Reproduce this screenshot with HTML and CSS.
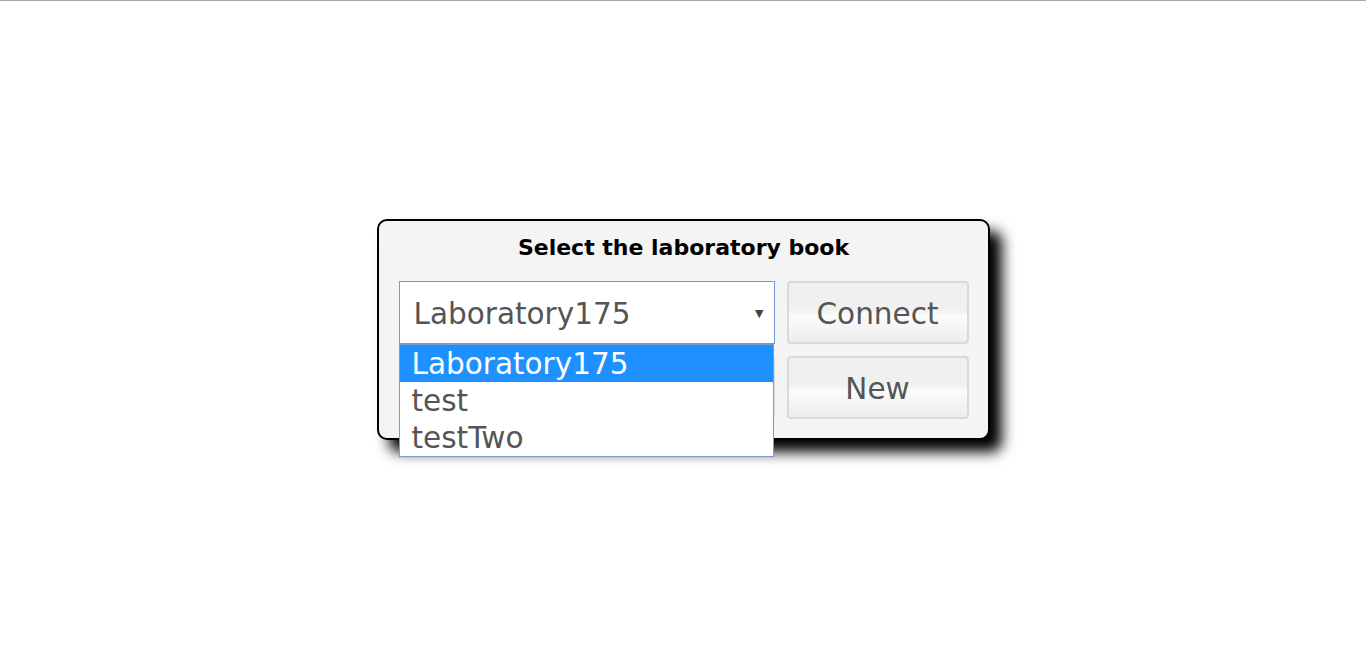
FILE: index.html
```html
<!DOCTYPE html>
<html>
<head>
<meta charset="utf-8">
<link rel="stylesheet" href="styles.css">
</head>
<body>
<div class="page">
  <div class="dialog">
    <div class="title">Select the laboratory book</div>
    <div class="grid">
      <div class="select-wrap">
        <div class="select">
          <span class="select-value">Laboratory175</span>
          <span class="arrow">▼</span>
        </div>
        <div class="dropdown">
          <div class="option selected">Laboratory175</div>
          <div class="option">test</div>
          <div class="option">testTwo</div>
        </div>
      </div>
      <button class="btn">Connect</button>
      <button class="btn" aria-label="Delete"></button>
      <button class="btn">New</button>
    </div>
  </div>
</div>
</body>
</html>
```
FILE: styles.css
```css
html, body {
  margin: 0;
  padding: 0;
  background: #fff;
}
body {
  border-top: 1px solid #a9a9a9;
  font-family: "DejaVu Sans", Verdana, sans-serif;
}
.page {
  height: 657px;
  display: flex;
  align-items: center;
  justify-content: center;
}
.dialog {
  width: 570px;
  box-sizing: content-box;
  background: #f4f4f4;
  border: 2px solid #000;
  border-radius: 10px;
  box-shadow: 12px 12px 14px #000;
  padding: 12px 19px 19px 20px;
}
.title {
  text-align: center;
  font-weight: bold;
  font-size: 22px;
  line-height: 30px;
  color: #000;
  margin-bottom: 18px;
}
.grid {
  display: grid;
  grid-template-columns: 376px 182px;
  grid-auto-rows: 63px;
  column-gap: 12px;
  row-gap: 12px;
}
.select-wrap {
  position: relative;
}
.select {
  height: 100%;
  box-sizing: border-box;
  background: #fff;
  border: 1px solid #6f9ad8;
  display: flex;
  align-items: center;
  padding: 2px 10px 0 14px;
}
.select-value {
  flex: 1;
  font-size: 29.5px;
  color: #555;
}
.arrow {
  font-size: 11px;
  color: #444;
}
.dropdown {
  position: absolute;
  left: 0;
  top: 100%;
  width: 375px;
  box-sizing: border-box;
  background: #fff;
  border: 1px solid #7a9cd3;
  z-index: 2;
}
.option {
  height: 37px;
  line-height: 39px;
  padding-left: 12px;
  font-size: 29.5px;
  color: #555;
}
.option.selected {
  background: #1e90ff;
  color: #fff;
}
.btn {
  font-family: "DejaVu Sans", Verdana, sans-serif;
  font-size: 29.5px;
  color: #555;
  border: 2px solid #d9d9d9;
  border-radius: 4px;
  background: linear-gradient(#f0f0f0 0%, #f0f0f0 45%, #fbfbfb 55%, #ededed 100%);
  padding: 2px 0 0 0;
}
```
